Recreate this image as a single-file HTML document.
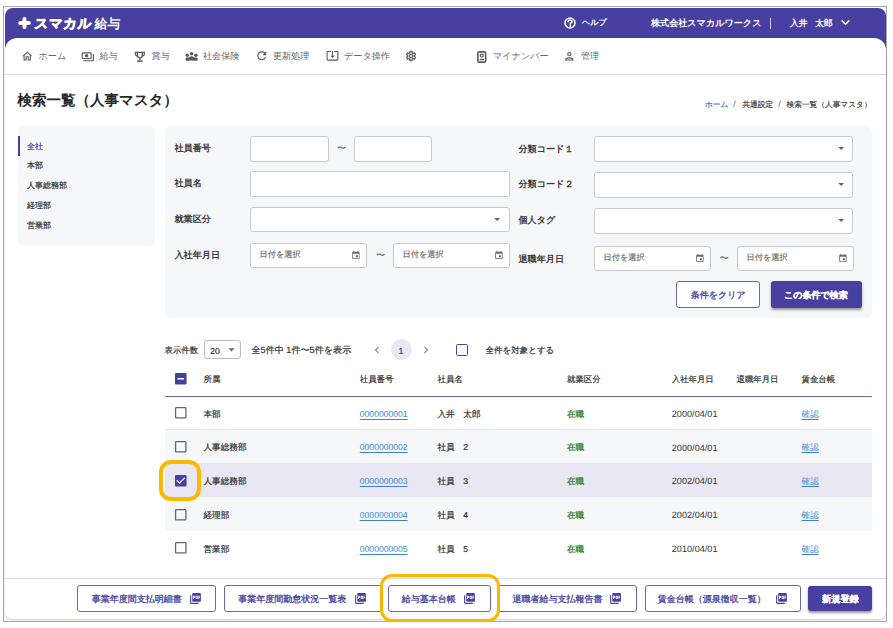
<!DOCTYPE html>
<html lang="ja">
<head>
<meta charset="utf-8">
<style>
*{box-sizing:border-box;margin:0;padding:0}
html,body{width:893px;height:628px;overflow:hidden;background:#fff}
body{position:relative;font-family:"Liberation Sans",sans-serif;color:#333;text-rendering:geometricPrecision}
.a{position:absolute}
.t{position:absolute;white-space:nowrap;line-height:1}
.s{-webkit-text-stroke:0.2px currentColor}
.m{-webkit-text-stroke:0.3px currentColor}
svg{position:absolute;display:block;overflow:visible}
</style>
</head>
<body>
<div class="a" style="left:3px;top:6px;width:884px;height:616px;border:1px solid #a9a9a9"></div>
<div class="a" style="left:5px;top:8px;width:881px;height:44px;background:#4840a0;border-radius:8px 8px 0 0"></div>
<div class="a" style="left:5px;top:38px;width:881px;height:581px;background:#fff;border-radius:12px 12px 7px 7px;box-shadow:0 1px 2px rgba(0,0,0,.22)"></div>
<svg style="left:17.5px;top:16.8px" width="13" height="12" viewBox="0 0 13 12"><path d="M6.5 2v8M2.2 6h8.6" stroke="#fff" stroke-width="4" stroke-linecap="round"/></svg>
<div class="t" style="left:33.5px;top:17px;font-size:13.6px;color:#fff;font-weight:bold;letter-spacing:0.4px;-webkit-text-stroke:0.7px #fff;transform:skewX(-5deg);transform-origin:0 100%">スマカル</div>
<div class="t" style="left:94.5px;top:18px;font-size:12.9px;color:#fff;font-weight:bold">給与</div>
<svg style="left:563.8px;top:17.2px" width="12" height="12" viewBox="0 0 12 12"><circle cx="6" cy="6" r="5.0" fill="none" stroke="#fff" stroke-width="1.6"/><path d="M4.1 4.8c0-1.1.8-1.8 1.9-1.8s1.9.7 1.9 1.7c0 1.2-1.7 1.3-1.7 2.6" fill="none" stroke="#fff" stroke-width="1.6" stroke-linecap="round"/><circle cx="6.2" cy="9.0" r="0.9" fill="#fff"/></svg>
<div class="t" style="left:582px;top:19.3px;font-size:8.1px;color:#fff;font-weight:bold">ヘルプ</div>
<div class="t" style="left:651px;top:19px;font-size:9.08px;color:#fff;font-weight:bold">株式会社スマカルワークス</div>
<div class="a" style="left:770.3px;top:18px;width:1px;height:11px;background:#c9c6e6"></div>
<div class="t" style="left:790px;top:19.2px;font-size:8.7px;color:#fff;font-weight:bold">入井</div>
<div class="t" style="left:815.2px;top:19.2px;font-size:8.7px;color:#fff;font-weight:bold">太郎</div>
<svg style="left:837.5px;top:15.3px" width="15" height="15" viewBox="0 0 24 24"><path d="M6.6 9.4l5.4 5.4 5.4-5.4" fill="none" stroke="#fff" stroke-width="2.4" stroke-linecap="round" stroke-linejoin="round"/></svg>
<svg style="left:20.6px;top:49.9px" width="12.5" height="12.5" viewBox="0 0 24 24"><path fill="#5a5a5a" d="M12 5.69l5 4.5V18h-2v-6H9v6H7v-7.81l5-4.5M12 3L2 12h3v8h6v-6h2v6h6v-8h3L12 3z"/></svg>
<div class="t" style="left:38.5px;top:52px;font-size:9.1px;color:#666;">ホーム</div>
<svg style="left:81px;top:50px" width="13.5" height="13.5" viewBox="0 0 24 24"><path fill="#5a5a5a" d="M19 14V6c0-1.1-.9-2-2-2H3c-1.1 0-2 .9-2 2v8c0 1.1.9 2 2 2h14c1.1 0 2-.9 2-2zm-2 0H3V6h14v8zm-7-7c-1.66 0-3 1.34-3 3s1.34 3 3 3 3-1.34 3-3-1.34-3-3-3zm13 0v11c0 1.1-.9 2-2 2H4v-2h17V7h2z"/></svg>
<div class="t" style="left:99.5px;top:52px;font-size:9.1px;color:#666;">給与</div>
<svg style="left:130px;top:48px" width="20" height="16" viewBox="0 0 20 16"><g fill="none" stroke="#5a5a5a" stroke-width="1.3"><path d="M7.5 4.4h4.8v3.1a2.4 2.4 0 0 1-4.8 0z"/><path d="M7.5 4.4H5.4v1.3a2.3 2.3 0 0 0 2.3 2.2M12.3 4.4h2.1v1.3a2.3 2.3 0 0 1-2.3 2.2"/><path d="M9.9 9.9v2.4" stroke-width="1.2"/></g><rect x="7.2" y="12.3" width="5.4" height="1.5" fill="#5a5a5a"/></svg>
<div class="t" style="left:151.5px;top:52px;font-size:9.1px;color:#666;">賞与</div>
<svg style="left:182px;top:48px" width="20" height="16" viewBox="0 0 20 16"><g fill="#5a5a5a"><circle cx="5.3" cy="7.3" r="1.7"/><circle cx="9.6" cy="5.7" r="1.8"/><circle cx="13.9" cy="7.3" r="1.7"/><rect x="3.6" y="9.6" width="3.8" height="3.2" rx="1.1"/><rect x="11.8" y="9.6" width="3.8" height="3.2" rx="1.1"/><path d="M6.6 12.4v-1.6c0-1.4 1.3-2.5 3-2.5s3 1.1 3 2.5v1.6z"/></g></svg>
<div class="t" style="left:203px;top:52px;font-size:9.1px;color:#666;">社会保険</div>
<svg style="left:254.5px;top:49px" width="13.5" height="13.5" viewBox="0 0 24 24"><path fill="#5a5a5a" d="M17.65 6.35C16.2 4.9 14.21 4 12 4c-4.42 0-7.99 3.58-7.99 8s3.57 8 7.99 8c3.73 0 6.84-2.55 7.73-6h-2.08c-.82 2.33-3.04 4-5.65 4-3.31 0-6-2.69-6-6s2.69-6 6-6c1.66 0 3.14.69 4.22 1.78L13 11h7V4l-2.35 2.35z"/></svg>
<div class="t" style="left:273px;top:52px;font-size:9.1px;color:#666;">更新処理</div>
<svg style="left:325.8px;top:49.2px" width="13" height="13" viewBox="0 0 24 24"><path fill="#5a5a5a" d="M12 16.5l4-4h-3v-9h-2v9H8l4 4zm9-13h-6v1.99h6v14.03H3V5.49h6V3.5H3c-1.1 0-2 .9-2 2v14c0 1.1.9 2 2 2h18c1.1 0 2-.9 2-2v-14c0-1.1-.9-2-2-2z"/></svg>
<div class="t" style="left:344px;top:52px;font-size:9.1px;color:#666;">データ操作</div>
<svg style="left:400.7px;top:46.35px" width="20" height="20" viewBox="0 0 20 20"><path d="M8.76 6.94 L8.97 5.52 L11.03 5.52 L11.24 6.94 L12.03 7.40 L13.36 6.86 L14.40 8.66 L13.27 9.54 L13.27 10.46 L14.40 11.34 L13.36 13.14 L12.03 12.60 L11.24 13.06 L11.03 14.48 L8.97 14.48 L8.76 13.06 L7.97 12.60 L6.64 13.14 L5.60 11.34 L6.73 10.46 L6.73 9.54 L5.60 8.66 L6.64 6.86 L7.97 7.40Z" fill="none" stroke="#5a5a5a" stroke-width="1.3" stroke-linejoin="round"/><circle cx="10" cy="10" r="1.6" fill="none" stroke="#5a5a5a" stroke-width="1.2"/></svg>
<svg style="left:477px;top:50.5px" width="9.5" height="12" viewBox="0 0 9.5 12"><rect x="0.9" y="0.9" width="7.7" height="10.2" rx="1.2" fill="none" stroke="#5a5a5a" stroke-width="1.6"/><circle cx="4.75" cy="4.6" r="1.5" fill="none" stroke="#5a5a5a" stroke-width="1.1"/><rect x="2.6" y="7.9" width="4.3" height="1.3" fill="#5a5a5a"/></svg>
<div class="t" style="left:493px;top:52px;font-size:9.1px;color:#666;">マイナンバー</div>
<svg style="left:563px;top:49.6px" width="12.6" height="12.6" viewBox="0 0 24 24"><path fill="#5a5a5a" d="M12 6c1.1 0 2 .9 2 2s-.9 2-2 2-2-.9-2-2 .9-2 2-2m0 10c2.7 0 5.8 1.29 6 2H6c.23-.72 3.31-2 6-2m0-12C9.79 4 8 5.79 8 8s1.79 4 4 4 4-1.79 4-4-1.79-4-4-4zm0 10c-2.67 0-8 1.34-8 4v2h16v-2c0-2.66-5.33-4-8-4z"/></svg>
<div class="t" style="left:581px;top:52px;font-size:9.1px;color:#666;">管理</div>
<div class="a" style="left:5px;top:73.5px;width:881px;height:1px;background:#d9d9d9"></div>
<div class="t" style="left:17.6px;top:93.5px;font-size:14.5px;color:#262626;font-weight:bold">検索一覧（人事マスタ）</div>
<div class="t s" style="left:705px;top:100.7px;font-size:7.7px;color:#2f78d0;">ホーム</div>
<div class="t" style="left:733.3px;top:100.4px;font-size:9px;color:#666;">/</div>
<div class="t s" style="left:742.3px;top:100.7px;font-size:7.7px;color:#444;">共通設定</div>
<div class="t" style="left:778.3px;top:100.4px;font-size:9px;color:#666;">/</div>
<div class="t s" style="left:786.5px;top:100.7px;font-size:7.7px;color:#444;">検索一覧（人事マスタ）</div>
<div class="a" style="left:18px;top:126px;width:136.5px;height:120px;background:#f6f7f9;border-radius:6px"></div>
<div class="a" style="left:18px;top:136px;width:2px;height:20px;background:#4840a0"></div>
<div class="t s" style="left:27px;top:142.5px;font-size:8px;color:#4840a0;">全社</div>
<div class="t s" style="left:27px;top:161.5px;font-size:8px;color:#333;">本部</div>
<div class="t s" style="left:27px;top:182.3px;font-size:8px;color:#333;">人事総務部</div>
<div class="t s" style="left:27px;top:202px;font-size:8px;color:#333;">経理部</div>
<div class="t s" style="left:27px;top:222.4px;font-size:8px;color:#333;">営業部</div>
<div class="a" style="left:165px;top:126px;width:707px;height:192px;background:#f6f7f9;border-radius:6px"></div>
<div class="t" style="left:174.5px;top:144.2px;font-size:9.1px;color:#3a3a3a;font-weight:bold">社員番号</div>
<div class="t" style="left:174.5px;top:179px;font-size:9.1px;color:#3a3a3a;font-weight:bold">社員名</div>
<div class="t" style="left:174.5px;top:214.5px;font-size:9.1px;color:#3a3a3a;font-weight:bold">就業区分</div>
<div class="t" style="left:174.5px;top:250.7px;font-size:9.1px;color:#3a3a3a;font-weight:bold">入社年月日</div>
<div class="a" style="left:250px;top:136px;width:78.5px;height:25.5px;background:#fff;border:1px solid #c9c9c9;border-radius:3px"></div>
<div class="t s" style="left:337px;top:144px;font-size:9px;color:#666;">〜</div>
<div class="a" style="left:354px;top:136px;width:77.5px;height:25.5px;background:#fff;border:1px solid #c9c9c9;border-radius:3px"></div>
<div class="a" style="left:250px;top:171px;width:260px;height:25.5px;background:#fff;border:1px solid #c9c9c9;border-radius:3px"></div>
<div class="a" style="left:250px;top:206.5px;width:260px;height:25.5px;background:#fff;border:1px solid #c9c9c9;border-radius:3px"></div>
<svg style="left:490.4px;top:211.6px" width="14.4" height="14.4" viewBox="0 0 24 24"><path fill="#666" d="M7 10l5 5 5-5z"/></svg>
<div class="a" style="left:250px;top:242.5px;width:116.5px;height:25.5px;background:#fff;border:1px solid #c9c9c9;border-radius:3px"></div>
<div class="t s" style="left:259.5px;top:251.0px;font-size:8.2px;color:#727272;">日付を選択</div>
<svg style="left:351.3px;top:250.1px" width="9.8" height="9.8" viewBox="0 0 24 24"><path fill="#6a6a6a" d="M16 13h-3c-.55 0-1 .45-1 1v3c0 .55.45 1 1 1h3c.55 0 1-.45 1-1v-3c0-.55-.45-1-1-1zm0-10v1H8V3c0-.55-.45-1-1-1s-1 .45-1 1v1H5c-1.11 0-1.99.9-1.99 2L3 20c0 1.1.89 2 2 2h14c1.1 0 2-.9 2-2V6c0-1.1-.9-2-2-2h-1V3c0-.55-.45-1-1-1s-1 .45-1 1zm2 17H6c-.55 0-1-.45-1-1V9h14v10c0 .55-.45 1-1 1z"/></svg>
<div class="t s" style="left:376px;top:251px;font-size:9px;color:#666;">〜</div>
<div class="a" style="left:393px;top:242.5px;width:116.5px;height:25.5px;background:#fff;border:1px solid #c9c9c9;border-radius:3px"></div>
<div class="t s" style="left:402.5px;top:251.0px;font-size:8.2px;color:#727272;">日付を選択</div>
<svg style="left:494.3px;top:250.1px" width="9.8" height="9.8" viewBox="0 0 24 24"><path fill="#6a6a6a" d="M16 13h-3c-.55 0-1 .45-1 1v3c0 .55.45 1 1 1h3c.55 0 1-.45 1-1v-3c0-.55-.45-1-1-1zm0-10v1H8V3c0-.55-.45-1-1-1s-1 .45-1 1v1H5c-1.11 0-1.99.9-1.99 2L3 20c0 1.1.89 2 2 2h14c1.1 0 2-.9 2-2V6c0-1.1-.9-2-2-2h-1V3c0-.55-.45-1-1-1s-1 .45-1 1zm2 17H6c-.55 0-1-.45-1-1V9h14v10c0 .55-.45 1-1 1z"/></svg>
<div class="t" style="left:518.5px;top:144.5px;font-size:9.1px;color:#3a3a3a;font-weight:bold">分類コード１</div>
<div class="t" style="left:518.5px;top:180px;font-size:9.1px;color:#3a3a3a;font-weight:bold">分類コード２</div>
<div class="t" style="left:518.5px;top:215.5px;font-size:9.1px;color:#3a3a3a;font-weight:bold">個人タグ</div>
<div class="t" style="left:518.5px;top:254.5px;font-size:9.1px;color:#3a3a3a;font-weight:bold">退職年月日</div>
<div class="a" style="left:593.5px;top:136px;width:259.6px;height:26px;background:#fff;border:1px solid #c9c9c9;border-radius:3px"></div>
<svg style="left:833.8px;top:141.3px" width="14.4" height="14.4" viewBox="0 0 24 24"><path fill="#666" d="M7 10l5 5 5-5z"/></svg>
<div class="a" style="left:593.5px;top:172px;width:259.6px;height:26px;background:#fff;border:1px solid #c9c9c9;border-radius:3px"></div>
<svg style="left:833.8px;top:177.3px" width="14.4" height="14.4" viewBox="0 0 24 24"><path fill="#666" d="M7 10l5 5 5-5z"/></svg>
<div class="a" style="left:593.5px;top:208px;width:259.6px;height:26px;background:#fff;border:1px solid #c9c9c9;border-radius:3px"></div>
<svg style="left:833.8px;top:213.3px" width="14.4" height="14.4" viewBox="0 0 24 24"><path fill="#666" d="M7 10l5 5 5-5z"/></svg>
<div class="a" style="left:594px;top:245.5px;width:116.5px;height:25.5px;background:#fff;border:1px solid #c9c9c9;border-radius:3px"></div>
<div class="t s" style="left:603.5px;top:254.0px;font-size:8.2px;color:#727272;">日付を選択</div>
<svg style="left:695.3px;top:253.1px" width="9.8" height="9.8" viewBox="0 0 24 24"><path fill="#6a6a6a" d="M16 13h-3c-.55 0-1 .45-1 1v3c0 .55.45 1 1 1h3c.55 0 1-.45 1-1v-3c0-.55-.45-1-1-1zm0-10v1H8V3c0-.55-.45-1-1-1s-1 .45-1 1v1H5c-1.11 0-1.99.9-1.99 2L3 20c0 1.1.89 2 2 2h14c1.1 0 2-.9 2-2V6c0-1.1-.9-2-2-2h-1V3c0-.55-.45-1-1-1s-1 .45-1 1zm2 17H6c-.55 0-1-.45-1-1V9h14v10c0 .55-.45 1-1 1z"/></svg>
<div class="t s" style="left:719.5px;top:254px;font-size:9px;color:#666;">〜</div>
<div class="a" style="left:737px;top:245.5px;width:116.5px;height:25.5px;background:#fff;border:1px solid #c9c9c9;border-radius:3px"></div>
<div class="t s" style="left:746.5px;top:254.0px;font-size:8.2px;color:#727272;">日付を選択</div>
<svg style="left:838.3px;top:253.1px" width="9.8" height="9.8" viewBox="0 0 24 24"><path fill="#6a6a6a" d="M16 13h-3c-.55 0-1 .45-1 1v3c0 .55.45 1 1 1h3c.55 0 1-.45 1-1v-3c0-.55-.45-1-1-1zm0-10v1H8V3c0-.55-.45-1-1-1s-1 .45-1 1v1H5c-1.11 0-1.99.9-1.99 2L3 20c0 1.1.89 2 2 2h14c1.1 0 2-.9 2-2V6c0-1.1-.9-2-2-2h-1V3c0-.55-.45-1-1-1s-1 .45-1 1zm2 17H6c-.55 0-1-.45-1-1V9h14v10c0 .55-.45 1-1 1z"/></svg>
<div class="a" style="left:676px;top:281px;width:84px;height:27.2px;border:1px solid #6a64b4;border-radius:3px;background:#fff"></div>
<div class="t m" style="left:690.8px;top:290.8px;font-size:9px;color:#4840a0;">条件をクリア</div>
<div class="a" style="left:771px;top:281.3px;width:90.5px;height:26.6px;border-radius:3px;background:#4840a0;box-shadow:0 1.5px 2.5px rgba(0,0,0,.4)"></div>
<div class="t" style="left:784px;top:290.5px;font-size:9px;color:#fff;font-weight:bold;-webkit-text-stroke:0.25px #fff">この条件で検索</div>
<div class="t s" style="left:164.5px;top:346px;font-size:8.4px;color:#333;">表示件数</div>
<div class="a" style="left:204px;top:340px;width:36.5px;height:19.3px;border:1px solid #bdbdbd;border-radius:3px;background:#fff"></div>
<div class="t s" style="left:210.3px;top:346.5px;font-size:8.6px;color:#333;">20</div>
<svg style="left:224px;top:342px" width="15" height="15" viewBox="0 0 24 24"><path fill="#666" d="M7 10l5 5 5-5z"/></svg>
<div class="t s" style="left:251.5px;top:345.5px;font-size:9.1px;color:#333;">全5件中 1件〜5件を表示</div>
<svg style="left:369.7px;top:342.8px" width="14" height="14" viewBox="0 0 24 24"><path fill="#888" d="M15.41 7.41L14 6l-6 6 6 6 1.41-1.41L10.83 12z"/></svg>
<div class="a" style="left:390.6px;top:338.8px;width:21px;height:21px;border-radius:50%;background:#e9e7f4"></div>
<div class="t s" style="left:398.6px;top:346.6px;font-size:8.6px;color:#4840a0;font-weight:normal">1</div>
<svg style="left:419px;top:342.8px" width="14" height="14" viewBox="0 0 24 24"><path fill="#888" d="M10 6L8.59 7.41 13.17 12l-4.58 4.59L10 18l6-6z"/></svg>
<div class="a" style="left:456px;top:344px;width:12px;height:11.5px;border:1.6px solid #4840a0;border-radius:1.5px"></div>
<div class="t s" style="left:485.5px;top:345.5px;font-size:8.5px;color:#333;">全件を対象とする</div>
<svg style="left:172.5px;top:370.5px" width="15.5" height="15.5" viewBox="0 0 24 24"><path fill="#4840a0" d="M19 3H5c-1.1 0-2 .9-2 2v14c0 1.1.9 2 2 2h14c1.1 0 2-.9 2-2V5c0-1.1-.9-2-2-2zm-2 10H7v-2h10v2z"/></svg>
<div class="t s" style="left:203.5px;top:374.5px;font-size:8.4px;color:#333;">所属</div>
<div class="t s" style="left:359.8px;top:374.5px;font-size:8.4px;color:#333;">社員番号</div>
<div class="t s" style="left:437.5px;top:374.5px;font-size:8.4px;color:#333;">社員名</div>
<div class="t s" style="left:567px;top:374.5px;font-size:8.4px;color:#333;">就業区分</div>
<div class="t s" style="left:671.8px;top:374.5px;font-size:8.4px;color:#333;">入社年月日</div>
<div class="t s" style="left:736.5px;top:374.5px;font-size:8.4px;color:#333;">退職年月日</div>
<div class="t s" style="left:801.6px;top:374.5px;font-size:8.4px;color:#333;">賃金台帳</div>
<div class="a" style="left:165px;top:395.5px;width:707px;height:1.2px;background:#6b64b4"></div>
<div class="a" style="left:165px;top:396.7px;width:707px;height:32.8px;background:#fff"></div>
<div class="a" style="left:165px;top:429.0px;width:707px;height:1px;background:#e3e3e6"></div>
<svg style="left:172.5px;top:405.35px" width="15.5" height="15.5" viewBox="0 0 24 24"><path fill="#666" d="M19 5v14H5V5h14m0-2H5c-1.1 0-2 .9-2 2v14c0 1.1.9 2 2 2h14c1.1 0 2-.9 2-2V5c0-1.1-.9-2-2-2z"/></svg>
<div class="t s" style="left:203.5px;top:409.6px;font-size:8.6px;color:#333;">本部</div>
<div class="t" style="left:359.8px;top:409.6px;font-size:8.6px;color:#3a84d6;text-decoration:underline;text-underline-offset:1.5px;">0000000001</div>
<div class="t s" style="left:437.5px;top:409.6px;font-size:8.6px;color:#333;">入井　太郎</div>
<div class="t" style="left:567px;top:409.6px;font-size:8.6px;color:#3a8a40;font-weight:bold">在職</div>
<div class="t" style="left:671.8px;top:410.2px;font-size:9.15px;color:#333;">2000/04/01</div>
<div class="t" style="left:801.6px;top:409.6px;font-size:8.6px;color:#3a84d6;text-decoration:underline;text-underline-offset:1.5px;">確認</div>
<div class="a" style="left:165px;top:429.5px;width:707px;height:33.8px;background:#f6f7f9"></div>
<div class="a" style="left:165px;top:462.8px;width:707px;height:1px;background:#e3e3e6"></div>
<svg style="left:172.5px;top:438.65px" width="15.5" height="15.5" viewBox="0 0 24 24"><path fill="#666" d="M19 5v14H5V5h14m0-2H5c-1.1 0-2 .9-2 2v14c0 1.1.9 2 2 2h14c1.1 0 2-.9 2-2V5c0-1.1-.9-2-2-2z"/></svg>
<div class="t s" style="left:203.5px;top:442.9px;font-size:8.6px;color:#333;">人事総務部</div>
<div class="t" style="left:359.8px;top:442.9px;font-size:8.6px;color:#3a84d6;text-decoration:underline;text-underline-offset:1.5px;">0000000002</div>
<div class="t s" style="left:437.5px;top:442.9px;font-size:8.6px;color:#333;">社員　2</div>
<div class="t" style="left:567px;top:442.9px;font-size:8.6px;color:#3a8a40;font-weight:bold">在職</div>
<div class="t" style="left:671.8px;top:443.5px;font-size:9.15px;color:#333;">2000/04/01</div>
<div class="t" style="left:801.6px;top:442.9px;font-size:8.6px;color:#3a84d6;text-decoration:underline;text-underline-offset:1.5px;">確認</div>
<div class="a" style="left:165px;top:463.3px;width:707px;height:33.9px;background:#e9e7f4"></div>
<div class="a" style="left:165px;top:496.7px;width:707px;height:1px;background:#e3e3e6"></div>
<svg style="left:172.5px;top:472.5px" width="15.5" height="15.5" viewBox="0 0 24 24"><path fill="#4840a0" d="M19 3H5c-1.11 0-2 .9-2 2v14c0 1.1.89 2 2 2h14c1.11 0 2-.9 2-2V5c0-1.1-.89-2-2-2zm-9 14l-5-5 1.41-1.41L10 14.17l7.59-7.59L19 8l-9 9z"/></svg>
<div class="t s" style="left:203.5px;top:476.75px;font-size:8.6px;color:#333;">人事総務部</div>
<div class="t" style="left:359.8px;top:476.75px;font-size:8.6px;color:#3a84d6;text-decoration:underline;text-underline-offset:1.5px;">0000000003</div>
<div class="t s" style="left:437.5px;top:476.75px;font-size:8.6px;color:#333;">社員　3</div>
<div class="t" style="left:567px;top:476.75px;font-size:8.6px;color:#3a8a40;font-weight:bold">在職</div>
<div class="t" style="left:671.8px;top:477.35px;font-size:9.15px;color:#333;">2002/04/01</div>
<div class="t" style="left:801.6px;top:476.75px;font-size:8.6px;color:#3a84d6;text-decoration:underline;text-underline-offset:1.5px;">確認</div>
<div class="a" style="left:165px;top:497.2px;width:707px;height:34.1px;background:#f6f7f9"></div>
<div class="a" style="left:165px;top:530.8px;width:707px;height:1px;background:#e3e3e6"></div>
<svg style="left:172.5px;top:506.5px" width="15.5" height="15.5" viewBox="0 0 24 24"><path fill="#666" d="M19 5v14H5V5h14m0-2H5c-1.1 0-2 .9-2 2v14c0 1.1.9 2 2 2h14c1.1 0 2-.9 2-2V5c0-1.1-.9-2-2-2z"/></svg>
<div class="t s" style="left:203.5px;top:510.75px;font-size:8.6px;color:#333;">経理部</div>
<div class="t" style="left:359.8px;top:510.75px;font-size:8.6px;color:#3a84d6;text-decoration:underline;text-underline-offset:1.5px;">0000000004</div>
<div class="t s" style="left:437.5px;top:510.75px;font-size:8.6px;color:#333;">社員　4</div>
<div class="t" style="left:567px;top:510.75px;font-size:8.6px;color:#3a8a40;font-weight:bold">在職</div>
<div class="t" style="left:671.8px;top:511.35px;font-size:9.15px;color:#333;">2002/04/01</div>
<div class="t" style="left:801.6px;top:510.75px;font-size:8.6px;color:#3a84d6;text-decoration:underline;text-underline-offset:1.5px;">確認</div>
<div class="a" style="left:165px;top:531.3px;width:707px;height:33.7px;background:#fff"></div>
<svg style="left:172.5px;top:540.4px" width="15.5" height="15.5" viewBox="0 0 24 24"><path fill="#666" d="M19 5v14H5V5h14m0-2H5c-1.1 0-2 .9-2 2v14c0 1.1.9 2 2 2h14c1.1 0 2-.9 2-2V5c0-1.1-.9-2-2-2z"/></svg>
<div class="t s" style="left:203.5px;top:544.65px;font-size:8.6px;color:#333;">営業部</div>
<div class="t" style="left:359.8px;top:544.65px;font-size:8.6px;color:#3a84d6;text-decoration:underline;text-underline-offset:1.5px;">0000000005</div>
<div class="t s" style="left:437.5px;top:544.65px;font-size:8.6px;color:#333;">社員　5</div>
<div class="t" style="left:567px;top:544.65px;font-size:8.6px;color:#3a8a40;font-weight:bold">在職</div>
<div class="t" style="left:671.8px;top:545.25px;font-size:9.15px;color:#333;">2010/04/01</div>
<div class="t" style="left:801.6px;top:544.65px;font-size:8.6px;color:#3a84d6;text-decoration:underline;text-underline-offset:1.5px;">確認</div>
<div class="a" style="left:5px;top:578px;width:881px;height:1px;background:#dcdcdc"></div>
<div class="a" style="left:77.2px;top:585.2px;width:139.1px;height:26.6px;border:1px solid #6a64b4;border-radius:3px;background:#fff"></div>
<div class="t m" style="left:91.8px;top:595.1px;font-size:9px;color:#4840a0;">事業年度間支払明細書</div>
<svg style="left:188.9px;top:592.3px" width="13" height="13" viewBox="0 0 24 24"><path fill="#4840a0" d="M20 2H8c-1.1 0-2 .9-2 2v12c0 1.1.9 2 2 2h12c1.1 0 2-.9 2-2V4c0-1.1-.9-2-2-2zm-8.5 7.5c0 .83-.67 1.5-1.5 1.5H9v2H7.5V7H10c.83 0 1.5.67 1.5 1.5v1zm5 2c0 .83-.67 1.5-1.5 1.5h-2.5V7H15c.83 0 1.5.67 1.5 1.5v3zm4-3H19v1h1.5V11H19v2h-1.5V7h3v1.5zM9 9.5h1v-1H9v1zM4 6H2v14c0 1.1.9 2 2 2h14v-2H4V6zm10 5.5h1v-3h-1v3z"/></svg>
<div class="a" style="left:223.5px;top:585.2px;width:158.5px;height:26.6px;border:1px solid #6a64b4;border-radius:3px;background:#fff"></div>
<div class="t m" style="left:238.3px;top:595.1px;font-size:9px;color:#4840a0;">事業年度間勤怠状況一覧表</div>
<svg style="left:354.2px;top:592.3px" width="13" height="13" viewBox="0 0 24 24"><path fill="#4840a0" d="M20 2H8c-1.1 0-2 .9-2 2v12c0 1.1.9 2 2 2h12c1.1 0 2-.9 2-2V4c0-1.1-.9-2-2-2zm-8.5 7.5c0 .83-.67 1.5-1.5 1.5H9v2H7.5V7H10c.83 0 1.5.67 1.5 1.5v1zm5 2c0 .83-.67 1.5-1.5 1.5h-2.5V7H15c.83 0 1.5.67 1.5 1.5v3zm4-3H19v1h1.5V11H19v2h-1.5V7h3v1.5zM9 9.5h1v-1H9v1zM4 6H2v14c0 1.1.9 2 2 2h14v-2H4V6zm10 5.5h1v-3h-1v3z"/></svg>
<div class="a" style="left:388.3px;top:585.2px;width:102.7px;height:26.6px;border:1px solid #6a64b4;border-radius:3px;background:#fff"></div>
<div class="t m" style="left:401.8px;top:595.1px;font-size:9px;color:#4840a0;">給与基本台帳</div>
<svg style="left:463.4px;top:592.3px" width="13" height="13" viewBox="0 0 24 24"><path fill="#4840a0" d="M20 2H8c-1.1 0-2 .9-2 2v12c0 1.1.9 2 2 2h12c1.1 0 2-.9 2-2V4c0-1.1-.9-2-2-2zm-8.5 7.5c0 .83-.67 1.5-1.5 1.5H9v2H7.5V7H10c.83 0 1.5.67 1.5 1.5v1zm5 2c0 .83-.67 1.5-1.5 1.5h-2.5V7H15c.83 0 1.5.67 1.5 1.5v3zm4-3H19v1h1.5V11H19v2h-1.5V7h3v1.5zM9 9.5h1v-1H9v1zM4 6H2v14c0 1.1.9 2 2 2h14v-2H4V6zm10 5.5h1v-3h-1v3z"/></svg>
<div class="a" style="left:497px;top:585.2px;width:140.1px;height:26.6px;border:1px solid #6a64b4;border-radius:3px;background:#fff"></div>
<div class="t m" style="left:512.5px;top:595.1px;font-size:9px;color:#4840a0;">退職者給与支払報告書</div>
<svg style="left:609.4px;top:592.3px" width="13" height="13" viewBox="0 0 24 24"><path fill="#4840a0" d="M20 2H8c-1.1 0-2 .9-2 2v12c0 1.1.9 2 2 2h12c1.1 0 2-.9 2-2V4c0-1.1-.9-2-2-2zm-8.5 7.5c0 .83-.67 1.5-1.5 1.5H9v2H7.5V7H10c.83 0 1.5.67 1.5 1.5v1zm5 2c0 .83-.67 1.5-1.5 1.5h-2.5V7H15c.83 0 1.5.67 1.5 1.5v3zm4-3H19v1h1.5V11H19v2h-1.5V7h3v1.5zM9 9.5h1v-1H9v1zM4 6H2v14c0 1.1.9 2 2 2h14v-2H4V6zm10 5.5h1v-3h-1v3z"/></svg>
<div class="a" style="left:644.5px;top:585.2px;width:156.8px;height:26.6px;border:1px solid #6a64b4;border-radius:3px;background:#fff"></div>
<div class="t m" style="left:657.8px;top:595.1px;font-size:9px;color:#4840a0;">賃金台帳（源泉徴収一覧）</div>
<svg style="left:774.7px;top:592.3px" width="13" height="13" viewBox="0 0 24 24"><path fill="#4840a0" d="M20 2H8c-1.1 0-2 .9-2 2v12c0 1.1.9 2 2 2h12c1.1 0 2-.9 2-2V4c0-1.1-.9-2-2-2zm-8.5 7.5c0 .83-.67 1.5-1.5 1.5H9v2H7.5V7H10c.83 0 1.5.67 1.5 1.5v1zm5 2c0 .83-.67 1.5-1.5 1.5h-2.5V7H15c.83 0 1.5.67 1.5 1.5v3zm4-3H19v1h1.5V11H19v2h-1.5V7h3v1.5zM9 9.5h1v-1H9v1zM4 6H2v14c0 1.1.9 2 2 2h14v-2H4V6zm10 5.5h1v-3h-1v3z"/></svg>
<div class="a" style="left:808.2px;top:585.8px;width:63.7px;height:25.2px;border-radius:3px;background:#4840a0;box-shadow:0 1.5px 2.5px rgba(0,0,0,.4)"></div>
<div class="t" style="left:822px;top:594.5px;font-size:9.2px;color:#fff;font-weight:bold;-webkit-text-stroke:0.25px #fff">新規登録</div>
<div class="a" style="left:159.1px;top:460px;width:41.5px;height:40.6px;border:4.2px solid #fbb800;border-radius:12px"></div>
<div class="a" style="left:379.7px;top:573.9px;width:120.1px;height:47.8px;border:3.9px solid #fbb800;border-radius:12px"></div>
</body>
</html>
